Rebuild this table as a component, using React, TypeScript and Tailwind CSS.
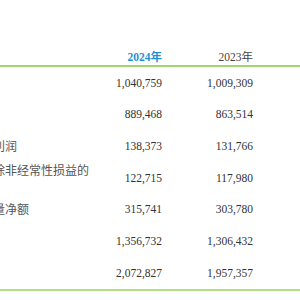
const rows: { label: string[]; y2024: string; y2023: string }[] = [
  { label: ['营业收入'], y2024: '1,040,759', y2023: '1,009,309' },
  { label: ['营业成本'], y2024: '889,468', y2023: '863,514' },
  { label: ['归属于母公司股东的净利润'], y2024: '138,373', y2023: '131,766' },
  { label: ['归属于母公司股东的扣除非经常性损益的', '净利润'], y2024: '122,715', y2023: '117,980' },
  { label: ['经营活动产生的现金流量净额'], y2024: '315,741', y2023: '303,780' },
  { label: ['股东权益合计'], y2024: '1,356,732', y2023: '1,306,432' },
  { label: ['总资产'], y2024: '2,072,827', y2023: '1,957,357' },
];

const num = "font-['Liberation_Serif','Noto_Sans_CJK_SC',serif] text-[11.5px] leading-4 text-right";

export default function App() {
  return (
    <div className="w-[300px] h-[300px] overflow-hidden bg-white">
      <div className="ml-[-127px] w-[460px]">
        <div className="grid grid-cols-[216px_73px_91px_1fr] pt-[49px] border-b-2 border-[#a4d46f]">
          <div />
          <div className={`${num} font-bold text-[#1f8fd6]`}>2024年</div>
          <div className={`${num} text-[#444]`}>2023年</div>
          <div />
        </div>

        <div className="border-b-2 border-[#b3de86]">
          {rows.map((r) => (
            <div key={r.y2024} className="grid grid-cols-[216px_73px_91px_1fr] items-center h-[31.67px]">
              <div className="font-['Noto_Sans_CJK_SC',sans-serif] text-[12px] leading-4 text-[#555] whitespace-nowrap">
                {r.label.map((l) => (
                  <div key={l}>{l}</div>
                ))}
              </div>
              <div className={`${num} text-[#333]`}>{r.y2024}</div>
              <div className={`${num} text-[#333]`}>{r.y2023}</div>
              <div />
            </div>
          ))}
        </div>
      </div>
    </div>
  );
}
